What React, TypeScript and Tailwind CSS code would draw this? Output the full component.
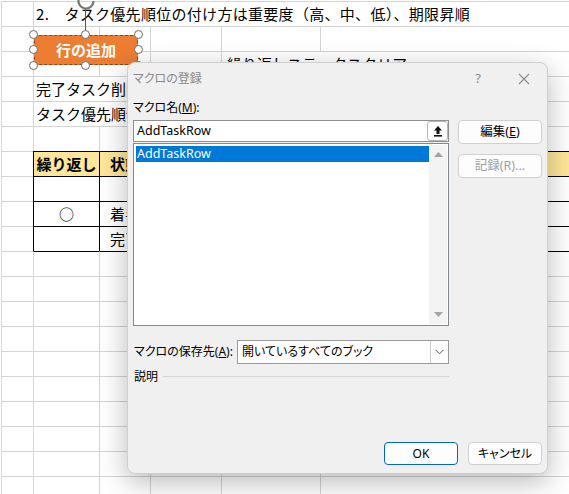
import React from 'react';

type C = { w: string; tb?: boolean; lb?: boolean; bg?: string; text?: string; cls?: string };

const A = 'w-[32px]';
const B = 'w-[66px]';
const Cc = 'w-[51px]';
const D = 'w-[71px]';
const E = 'w-[99px]';
const F = 'flex-1';

const plain = (): C[] => [{ w: A }, { w: B }, { w: Cc }, { w: D }, { w: E }, { w: F }];

const yellow = 'bg-[#ffe699]';

const rows: C[][] = [
  [{ w: A }, { w: F, text: '2.　タスク優先順位の付け方は重要度（高、中、低）、期限昇順', cls: 'pl-[2px] tracking-[0.3px]' }],
  plain(),
  [{ w: A }, { w: B }, { w: Cc }, { w: D }, { w: F, text: '繰り返しステータスクリア', cls: 'pl-[5px]' }],
  [{ w: A }, { w: F, text: '完了タスク削除', cls: 'pl-[2px]' }],
  [{ w: A }, { w: F, text: 'タスク優先順位更新', cls: 'pl-[2px]' }],
  plain(),
  [
    { w: A },
    { w: B, tb: true, lb: true, bg: yellow, text: '繰り返し', cls: 'justify-center font-bold' },
    { w: Cc, tb: true, lb: true, bg: yellow, text: '状態', cls: 'justify-center font-bold' },
    { w: D, tb: true, lb: true, bg: yellow },
    { w: E, tb: true, lb: true, bg: yellow },
    { w: F, tb: true, lb: true, bg: yellow },
  ],
  [{ w: A }, { w: B, tb: true, lb: true }, { w: Cc, tb: true, lb: true }, { w: D, tb: true, lb: true }, { w: E, tb: true, lb: true }, { w: F, tb: true, lb: true }],
  [
    { w: A },
    { w: B, tb: true, lb: true, text: '○', cls: 'justify-center' },
    { w: Cc, tb: true, lb: true, text: '着手', cls: 'justify-center' },
    { w: D, tb: true, lb: true },
    { w: E, tb: true, lb: true },
    { w: F, tb: true, lb: true },
  ],
  [
    { w: A },
    { w: B, tb: true, lb: true },
    { w: Cc, tb: true, lb: true, text: '完了', cls: 'justify-center' },
    { w: D, tb: true, lb: true },
    { w: E, tb: true, lb: true },
    { w: F, tb: true, lb: true },
  ],
  [{ w: A }, { w: B, tb: true }, { w: Cc, tb: true }, { w: D, tb: true }, { w: E, tb: true }, { w: F, tb: true }],
  ...Array.from({ length: 9 }, plain),
];

function Cell({ c }: { c: C }) {
  return (
    <div
      className={`${c.w} h-full shrink-0 border-l border-t ${c.tb ? 'border-t-black' : 'border-t-[#d4d4d4]'} ${
        c.lb ? 'border-l-black' : 'border-l-[#d4d4d4]'
      } ${c.bg ?? ''} flex items-center overflow-hidden whitespace-nowrap ${c.cls ?? ''}`}
    >
      {c.text}
    </div>
  );
}

const Handle = ({ pos }: { pos: string }) => (
  <div className={`absolute ${pos} w-[9px] h-[9px] rounded-full bg-white border-[1.5px] border-[#6b6b6b]`} />
);

function Shape() {
  return (
    <div className="absolute left-[34px] top-[35px] w-[104px] h-[30px]">
      {/* rotation handle */}
      <div className="absolute left-[51px] top-[-27px] w-px h-[27px] bg-[#555]" />
      <svg className="absolute left-[40px] top-[-46px]" width="24" height="24" viewBox="0 0 24 24">
        <path d="M19.5 12a7.5 7.5 0 1 1-2.6-5.7" fill="none" stroke="#777" strokeWidth="2.2" />
        <path d="M18.5 2.5v5h-5" fill="none" stroke="#777" strokeWidth="2.2" />
      </svg>
      <div className="w-full h-full bg-[#ed7d31] border border-dashed border-[#7a4a2a] flex items-center justify-center text-white font-bold text-[15px]">
        行の追加
      </div>
      <Handle pos="left-[-5px] top-[-5px]" />
      <Handle pos="left-[47px] top-[-5px]" />
      <Handle pos="right-[-5px] top-[-5px]" />
      <Handle pos="left-[-5px] top-[10px]" />
      <Handle pos="right-[-5px] top-[10px]" />
      <Handle pos="left-[-5px] bottom-[-5px]" />
      <Handle pos="left-[47px] bottom-[-5px]" />
      <Handle pos="right-[-5px] bottom-[-5px]" />
    </div>
  );
}

const Btn = ({ children, cls = '' }: { children: React.ReactNode; cls?: string }) => (
  <div className={`h-[24px] w-[84px] rounded-[4px] border border-[#d0d0d0] bg-[#fdfdfd] flex items-center justify-center text-[12.5px] ${cls}`}>
    {children}
  </div>
);

function Dialog() {
  return (
    <div className="absolute left-[127px] top-[62px] w-[421px] h-[412px] rounded-[8px] bg-[#f0f0f0] border border-[#cfcfcf] shadow-[0_8px_28px_rgba(0,0,0,0.28)] flex flex-col text-[12px] text-black font-['Noto_Sans','Noto_Sans_CJK_JP',sans-serif] [font-feature-settings:'palt']">
      <div className="h-[31px] flex items-center pl-[5px] shrink-0">
        <span className="text-[#8a8a8a]">マクロの登録</span>
        <div className="ml-auto flex h-full">
          <div className="w-[46px] flex items-center justify-center text-[#8a8a8a] text-[13px]">?</div>
          <div className="w-[46px] flex items-center justify-center">
            <svg width="12" height="12" viewBox="0 0 12 12">
              <path d="M1 1l10 10M11 1L1 11" stroke="#8a8a8a" strokeWidth="1.1" />
            </svg>
          </div>
        </div>
      </div>
      <div className="px-[5px] flex flex-col flex-1">
        <div className="h-[18px] leading-[18px] mt-[5px] mb-[3px]">
          マクロ名(<span className="underline">M</span>):
        </div>
        <div className="flex gap-[9px]">
          <div className="w-[316px] flex flex-col">
            <div className="h-[22px] bg-white border border-[#8f8f8f] flex items-center">
              <span className="pl-[3px] text-[12.5px]">AddTaskRow</span>
              <div className="ml-auto w-[21px] h-[20px] rounded-[3px] border border-[#b5b5b5] bg-white flex items-center justify-center">
                <svg width="10" height="12" viewBox="0 0 10 12">
                  <path d="M5 1L1 5.5h2.5V9h3V5.5H9z" fill="#111" />
                  <rect x="1" y="10" width="8" height="1.6" fill="#111" />
                </svg>
              </div>
            </div>
            <div className="mt-px h-[183px] bg-white border border-[#828790] flex p-px">
              <div className="flex-1 pt-px pl-px">
                <div className="h-[16px] bg-[#0078d7] text-white text-[12.5px] leading-[16px] pl-[1px]">AddTaskRow</div>
              </div>
              <div className="w-[18px] bg-[#f3f3f3] flex flex-col items-center justify-between py-[7px]">
                <svg width="9" height="5" viewBox="0 0 9 5">
                  <path d="M0 5L4.5 0L9 5z" fill="#a3a3a3" />
                </svg>
                <svg width="9" height="5" viewBox="0 0 9 5">
                  <path d="M0 0L4.5 5L9 0z" fill="#a3a3a3" />
                </svg>
              </div>
            </div>
          </div>
          <div className="flex flex-col gap-[10px]">
            <Btn>
              <span>
                編集(<span className="underline">E</span>)
              </span>
            </Btn>
            <Btn cls="text-[#a0a0a0]">記録(R)...</Btn>
          </div>
        </div>
        <div className="flex items-center mt-[14px] w-[316px]">
          <div className="w-[104px] shrink-0 pl-px">
            マクロの保存先(<span className="underline">A</span>):
          </div>
          <div className="flex-1 h-[24px] bg-white border border-[#9a9a9a] flex items-center">
            <span className="pl-[4px]">開いているすべてのブック</span>
            <div className="ml-auto w-[18px] h-full border-l border-[#c8c8c8] flex items-center justify-center">
              <svg width="9" height="6" viewBox="0 0 9 6">
                <path d="M0.5 0.8L4.5 4.8L8.5 0.8" fill="none" stroke="#555" strokeWidth="1" />
              </svg>
            </div>
          </div>
        </div>
        <div className="flex items-center mt-[4px] h-[18px] w-[316px]">
          <span className="pl-px">説明</span>
          <div className="flex-1 h-px bg-[#d6d6d6] ml-[5px] mt-[-2px]" />
        </div>
        <div className="mt-auto mb-[8px] flex justify-end gap-[10px]">
          <div className="h-[23px] w-[74px] rounded-[4px] border border-[#0067c0] bg-[#fdfdfd] flex items-center justify-center">OK</div>
          <div className="h-[23px] w-[74px] rounded-[4px] border border-[#d0d0d0] bg-[#fdfdfd] flex items-center justify-center">キャンセル</div>
        </div>
      </div>
    </div>
  );
}

export default function App() {
  return (
    <div className="relative w-[569px] h-[494px] overflow-hidden bg-white pl-px pt-px text-[15px] text-black font-['Noto_Sans_CJK_JP',sans-serif]">
      {rows.map((r, i) => (
        <div key={i} className="flex h-[25px]">
          {r.map((c, j) => (
            <Cell key={j} c={c} />
          ))}
        </div>
      ))}
      <Shape />
      <Dialog />
    </div>
  );
}
